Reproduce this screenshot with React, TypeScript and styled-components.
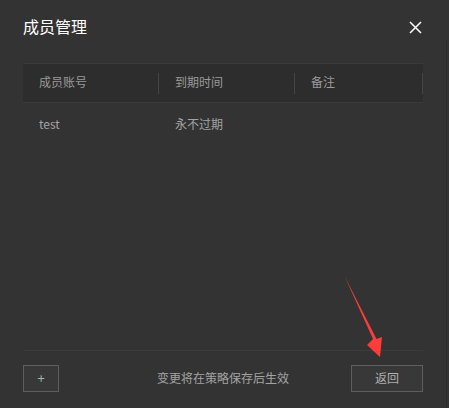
import React from "react";
import styled, { createGlobalStyle } from "styled-components";

const Global = createGlobalStyle`
  html, body { margin: 0; padding: 0; background: #333333; }
  body { font-family: "Noto Sans CJK SC", "Noto Sans", sans-serif; }
  * { box-sizing: border-box; }
`;

const Dialog = styled.div`
  position: relative;
  width: 449px;
  height: 408px;
  background: #333333;
  padding: 0 26px 16px 23px;
  display: flex;
  flex-direction: column;
  overflow: hidden;
  &::after {
    content: "";
    position: absolute;
    right: 2px;
    top: 40px;
    bottom: 0;
    width: 1px;
    background: #2c2c2c;
  }
`;

const Header = styled.div`
  height: 54px;
  display: flex;
  align-items: center;
  justify-content: space-between;
  margin-bottom: 9px;
`;

const Title = styled.div`
  color: #ffffff;
  font-size: 16px;
  line-height: 20px;
  padding-bottom: 3px;
`;

const CloseButton = styled.button`
  width: 14px;
  height: 14px;
  padding: 0;
  margin-right: 1px;
  border: none;
  background: transparent;
  display: flex;
  align-items: center;
  justify-content: center;
  cursor: pointer;
`;

const Table = styled.div`
  display: flex;
  flex-direction: column;
  border-top: 1px solid #3b3b3b;
`;

const HeadRow = styled.div`
  display: grid;
  grid-template-columns: 136px 136px 128px;
  height: 39px;
  background: #2d2d2d;
  border-bottom: 1px solid #3b3b3b;
`;

const HeadCell = styled.div`
  position: relative;
  display: flex;
  align-items: center;
  padding-left: 16px;
  padding-bottom: 3px;
  color: #9a9a9a;
  font-size: 12px;
  &::after {
    content: "";
    position: absolute;
    right: 0;
    top: 9px;
    width: 1px;
    height: 21px;
    background: #444444;
  }
`;

const BodyRow = styled.div`
  display: grid;
  grid-template-columns: 136px 136px 128px;
  height: 44px;
`;

const Cell = styled.div`
  display: flex;
  align-items: center;
  padding-left: 16px;
  padding-bottom: 4px;
  color: #a3a3a3;
  font-size: 12px;
`;

const Spacer = styled.div`
  flex: 1;
`;

const Footer = styled.div`
  border-top: 1px solid #3b3b3b;
  padding-top: 14px;
  display: flex;
  align-items: center;
  justify-content: space-between;
`;

const Button = styled.button<{ $w: number }>`
  width: ${(p) => p.$w}px;
  height: 27px;
  background: #383838;
  border: 1px solid #5e5e5e;
  color: #b0b0b0;
  font-family: "Noto Sans CJK SC", "Noto Sans", sans-serif;
  font-size: 12px;
  padding: 0 0 3px 0;
  display: flex;
  align-items: center;
  justify-content: center;
`;

const PlusText = styled.span`
  color: #9fb8b0;
  font-size: 13px;
`;

const Hint = styled.div`
  color: #a3a3a3;
  font-size: 12px;
  padding-left: 36px;
  padding-bottom: 3px;
`;

const Arrow = styled.svg`
  position: absolute;
  left: 0;
  top: 0;
  pointer-events: none;
`;

export default function App() {
  return (
    <>
      <Global />
      <Dialog>
        <Header>
          <Title>成员管理</Title>
          <CloseButton aria-label="close">
            <svg width="13" height="13" viewBox="0 0 13 13">
              <path d="M1 1 L12 12 M12 1 L1 12" stroke="#ffffff" strokeWidth="1.5" fill="none" />
            </svg>
          </CloseButton>
        </Header>
        <Table>
          <HeadRow>
            <HeadCell>成员账号</HeadCell>
            <HeadCell>到期时间</HeadCell>
            <HeadCell>备注</HeadCell>
          </HeadRow>
          <BodyRow>
            <Cell>test</Cell>
            <Cell>永不过期</Cell>
            <Cell></Cell>
          </BodyRow>
        </Table>
        <Spacer />
        <Footer>
          <Button $w={36}>
            <PlusText>+</PlusText>
          </Button>
          <Hint>变更将在策略保存后生效</Hint>
          <Button $w={72}>返回</Button>
        </Footer>
        <Arrow width="449" height="408" viewBox="0 0 449 408">
          <polygon
            points="344.5,276 373,339 367,345 380,357 382,337 376.5,339"
            fill="#ff3b3b"
          />
        </Arrow>
      </Dialog>
    </>
  );
}
